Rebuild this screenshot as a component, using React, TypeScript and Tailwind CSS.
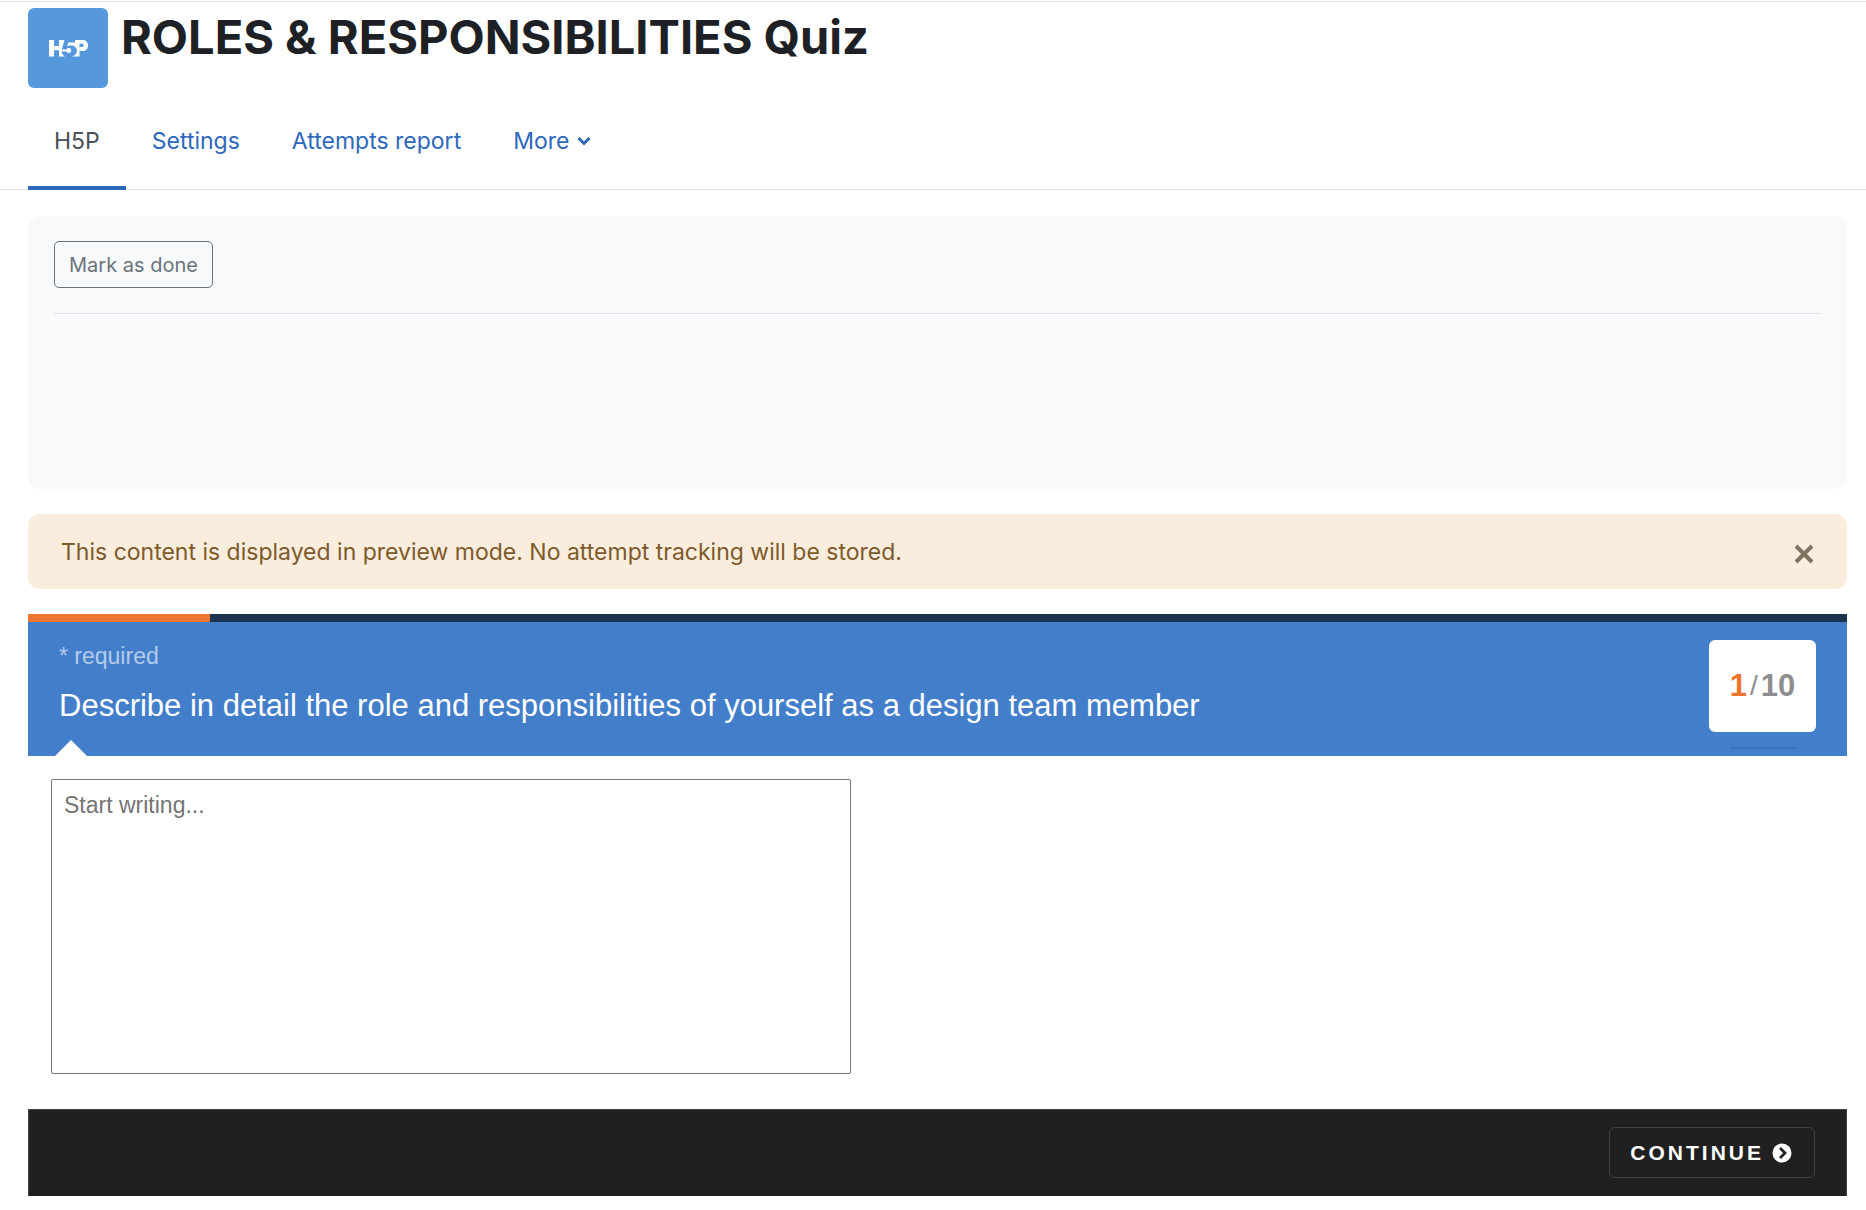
import React from "react";

const tabs = ["Settings", "Attempts report"];
const progress = { current: 1, total: 10 };

function H5PLogo() {
  return (
    <svg viewBox="0 0 80 80" className="size-20 shrink-0 rounded-md bg-[#5598dc]" aria-label="H5P" role="img">
      <g fill="#fff">
        <path d="M21 32h5v6h5v-6h5.500l-2.700 9.600h4.700a2.500 2.500 0 1 1 0 1.800h-5c.6 2.400 1.700 4 3.500 5.100h-6v-6.300h-5v6.300h-5z" />
        <path d="M47 32h7c4 0 6 2 6 5.500s-2 5.500-6 5.500h-2.500v5.500H44c3.300-1 4.900-3 4.900-5.700 0-3.600-3.200-5.700-7.400-5.200l-2.300.6 1-3.700H47z" />
      </g>
      <path d="M51.500 35.700h2c1.500 0 2.200.7 2.200 1.700s-.7 1.700-2.200 1.700h-2z" fill="#5598dc" />
    </svg>
  );
}

function ChevronDown() {
  return (
    <svg viewBox="0 0 14 10" className="h-2.5 w-3.5" fill="none" stroke="currentColor" strokeWidth="3" aria-hidden="true">
      <path d="M1.500 2 7 7.500 12.500 2" />
    </svg>
  );
}

export default function App() {
  return (
    <div className="min-h-screen bg-white pt-px font-['Inter',sans-serif] text-[#1d2125]">
      <header className="border-t border-[#dee2e6]">
        <div className="flex gap-[13px] px-7 pt-1.5">
          <H5PLogo />
          <h1 className="text-[47px] leading-[58px] font-bold">ROLES &amp; RESPONSIBILITIES Quiz</h1>
        </div>
        <nav className="mt-3 flex border-b border-[#dee2e6] px-7 text-[23px] leading-9 text-[#2d68bc]">
          <a href="#h5p" aria-current="page" className="-mb-px border-b-4 border-[#2d68bc] px-[26px] pt-[23px] pb-[27px] text-[#495057]">
            H5P
          </a>
          {tabs.map((tab) => (
            <a key={tab} href="#tab" className="px-[26px] pt-[23px] pb-[27px]">
              {tab}
            </a>
          ))}
          <button className="flex items-center gap-2 self-start px-[26px] pt-[23px] pb-[27px]">
            More
            <ChevronDown />
          </button>
        </nav>
      </header>

      <main className="flex flex-col gap-[25px] pt-[26px] pr-[19px] pl-7">
        <section className="h-[273px] rounded-xl bg-[#f8f9fb] px-[26px] pt-[25px]">
          <div className="border-b border-[#dee2e6] pb-[25px]">
            <button className="block rounded-[5px] border border-[#6a737b] px-[14px] pt-[9px] pb-[7px] text-[20px] leading-[29px] text-[#6a737b]">
              Mark as done
            </button>
          </div>
        </section>

        <div role="alert" className="flex items-center justify-between rounded-xl bg-[#faeddd] pt-5 pr-8 pb-[18px] pl-[33px] text-[23px] leading-[37px] text-[#7d5a29]">
          <p>This content is displayed in preview mode. No attempt tracking will be stored.</p>
          <button aria-label="Dismiss" className="text-[#7d7461]">
            <svg viewBox="0 0 22 22" className="mt-0.5 size-[22px]" stroke="currentColor" strokeWidth="4" aria-hidden="true">
              <path d="M3 3 19 19M19 3 3 19" />
            </svg>
          </button>
        </div>

        <section className="font-['Liberation_Sans',Arial,sans-serif]">
          <div className="h-2 bg-[#1c334f]">
            <div className="h-full bg-[#ed752f]" style={{ width: `${(progress.current / progress.total) * 100}%` }} />
          </div>
          <div className="relative flex items-start justify-between bg-[#437eca] pr-[31px] pb-6 pl-[31px]">
            <div className="pt-5">
              <p className="text-[23px] leading-7 text-[#b4cbea]">* required</p>
              <label htmlFor="answer" className="mt-4 block text-[31px] leading-10 text-white">
                Describe in detail the role and responsibilities of yourself as a design team member
              </label>
            </div>
            <div className="pt-[18px]">
              <div className="flex h-[92px] w-[107px] items-center justify-center gap-[3px] rounded-md bg-white text-[31px] font-bold text-[#8e8e8e]">
                <span className="text-[#ed752f]">{progress.current}</span>
                <span className="text-[28px] font-normal">/</span>
                <span>{progress.total}</span>
              </div>
            </div>
            <div className="absolute right-[51px] bottom-[7px] h-0.5 w-[66px] bg-[#3c72b7]" />
            <svg viewBox="0 0 32 16" className="absolute bottom-0 left-[27px] h-4 w-8" fill="#fff" aria-hidden="true">
              <path d="M16 0 32 16H0z" />
            </svg>
          </div>
          <div className="px-[23px] pt-[23px] pb-[35px]">
            <textarea
              id="answer"
              placeholder="Start writing..."
              className="block h-[295px] w-[800px] max-w-full resize-none rounded-xs border border-[#767676] px-3 py-[9px] text-[23px] leading-8 placeholder:text-[#757575]"
            />
          </div>
          <footer className="flex justify-end border border-b-0 border-[#444] bg-[#202020] pt-[17px] pr-[31px] pb-[18px]">
            <button className="flex h-[51px] items-center gap-2 rounded-md border border-[#444] pr-[22px] pl-5 text-[21px] font-bold text-white">
              <span className="tracking-[3px]">CONTINUE</span>
              <svg viewBox="0 0 20 20" className="size-5" aria-hidden="true">
                <circle cx="10" cy="10" r="9.500" fill="#fff" />
                <path d="M8 5 13 10 8 15" fill="none" stroke="#202020" strokeWidth="2.800" />
              </svg>
            </button>
          </footer>
        </section>
      </main>
    </div>
  );
}
